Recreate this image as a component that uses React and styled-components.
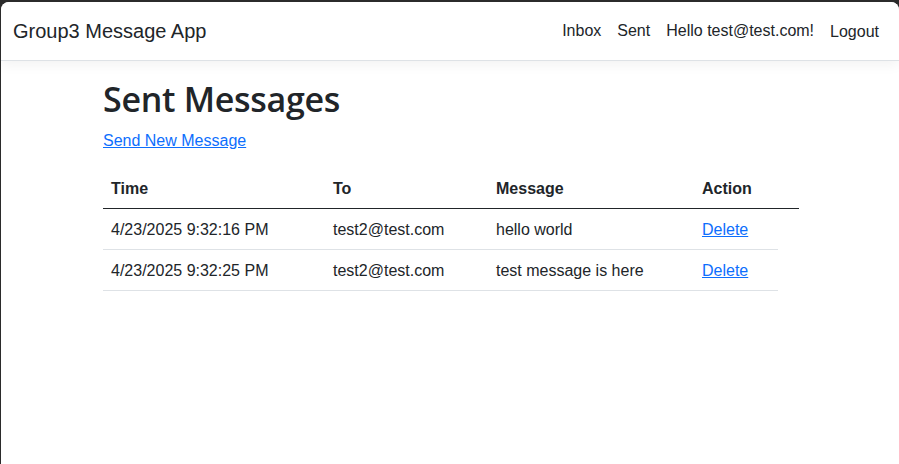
import React from 'react'
import styled, { createGlobalStyle } from 'styled-components'

const GlobalStyle = createGlobalStyle`
  html, body {
    margin: 0;
    padding: 0;
    background: #2b2b2b;
    height: 100%;
  }
  body {
    font-family: "Liberation Sans", Arial, sans-serif;
    font-size: 16px;
    line-height: 1.5;
    color: #212529;
  }
  #root {
    height: 100%;
  }
`

const Frame = styled.div`
  box-sizing: border-box;
  margin: 2px 0 0 1px;
  height: calc(100% - 2px);
  background: #fff;
  border-radius: 8px 8px 0 0;
  overflow: hidden;
`

const Navbar = styled.nav`
  display: flex;
  align-items: center;
  justify-content: space-between;
  padding: 8px 12px;
  height: 42px;
  border-bottom: 1px solid #dee2e6;
  box-shadow: 0 4px 12px rgba(0, 0, 0, 0.05);
  background: #fff;
  margin-bottom: 17px;
`

const Brand = styled.a`
  font-size: 20px;
  line-height: 30px;
  padding: 5px 0;
  color: #212529;
  text-decoration: none;
`

const NavList = styled.ul`
  display: flex;
  align-items: center;
  list-style: none;
  margin: 0;
  padding: 0;
`

const NavLink = styled.a`
  display: block;
  padding: 8px;
  color: #212529;
  text-decoration: none;
  margin-top: ${(p) => (p.$drop ? '2px' : '0')};
`

const Container = styled.main`
  max-width: 696px;
  margin: 0 auto;
  padding: 0 11px 0 13px;
`

const Title = styled.h1`
  font-family: "Open Sans", "Liberation Sans", sans-serif;
  font-size: 34px;
  font-weight: 600;
  line-height: 42px;
  margin: 0 0 9px;
  letter-spacing: -0.3px;
`

const Para = styled.p`
  margin: 0 0 15px;
`

const Link = styled.a`
  color: #0d6efd;
  text-decoration: underline;
`

const Table = styled.table`
  width: 100%;
  border-collapse: collapse;
  table-layout: fixed;
`

const Th = styled.th`
  box-sizing: border-box;
  text-align: left;
  font-weight: 700;
  padding: 9px 8px 7px;
  width: ${(p) => p.$w}px;
  border-bottom: 1px solid #212529;
`

const Td = styled.td`
  padding: 9px 8px 7px;
  border-bottom: 1px solid #dee2e6;
  white-space: nowrap;
`

const messages = [
  { time: '4/23/2025 9:32:16 PM', to: 'test2@test.com', body: 'hello world' },
  { time: '4/23/2025 9:32:25 PM', to: 'test2@test.com', body: 'test message is here' },
]

export default function App() {
  return (
    <>
      <GlobalStyle />
      <Frame>
        <Navbar>
          <Brand href="#">Group3 Message App</Brand>
          <NavList>
            <li><NavLink href="#">Inbox</NavLink></li>
            <li><NavLink href="#">Sent</NavLink></li>
            <li><NavLink href="#">Hello test@test.com!</NavLink></li>
            <li><NavLink href="#" $drop>Logout</NavLink></li>
          </NavList>
        </Navbar>
        <Container>
          <Title>Sent Messages</Title>
          <Para>
            <Link href="#">Send New Message</Link>
          </Para>
          <Table>
            <thead>
              <tr>
                <Th $w={222}>Time</Th>
                <Th $w={163}>To</Th>
                <Th $w={206}>Message</Th>
                <Th $w={84}>Action</Th>
                <Th $w={21}></Th>
              </tr>
            </thead>
            <tbody>
              {messages.map((m, i) => (
                <tr key={i}>
                  <Td>{m.time}</Td>
                  <Td>{m.to}</Td>
                  <Td>{m.body}</Td>
                  <Td>
                    <Link href="#">Delete</Link>
                  </Td>
                </tr>
              ))}
            </tbody>
          </Table>
        </Container>
      </Frame>
    </>
  )
}
